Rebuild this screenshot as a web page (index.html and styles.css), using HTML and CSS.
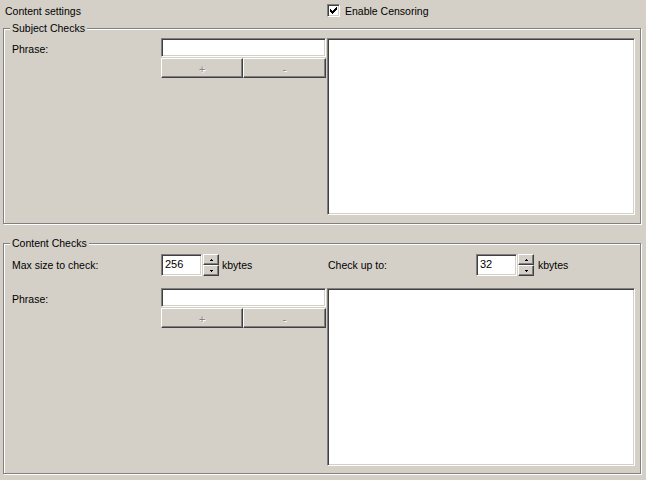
FILE: index.html
```html
<!DOCTYPE html>
<html>
<head>
<meta charset="utf-8">
<link rel="stylesheet" href="styles.css">
</head>
<body>
<div class="page">
  <div class="header">
    <span class="title">Content settings</span>
    <label class="check">
      <span class="checkbox"><svg width="7" height="7" viewBox="0 0 7 7" shape-rendering="crispEdges"><path d="M0 2h1v3h-1z M1 3h1v3h-1z M2 4h1v3h-1z M3 3h1v3h-1z M4 2h1v3h-1z M5 1h1v3h-1z M6 0h1v3h-1z" fill="#000"/></svg></span>
      <span>Enable Censoring</span>
    </label>
  </div>

  <div class="group group-subject">
    <span class="legend">Subject Checks</span>
    <div class="grid">
      <div class="label">Phrase:</div>
      <div class="editcol">
        <div class="edit"></div>
        <div class="btnrow">
          <div class="btn btn-plus">+</div>
          <div class="btn btn-minus">-</div>
        </div>
      </div>
      <div class="list list-subject"></div>
    </div>
  </div>

  <div class="group group-content">
    <span class="legend">Content Checks</span>
    <div class="grid grid-content">
      <div class="label">Max size to check:</div>
      <div class="spinrow">
        <div class="spinedit">256</div>
        <div class="spinner">
          <div class="spinbtn"><svg width="3" height="2" viewBox="0 0 3 2" shape-rendering="crispEdges"><path d="M1 0h1v1h1v1h-3v-1h1z" fill="#000"/></svg></div>
          <div class="spinbtn"><svg width="3" height="2" viewBox="0 0 3 2" shape-rendering="crispEdges"><path d="M0 0h3v1h-1v1h-1v-1h-1z" fill="#000"/></svg></div>
        </div>
        <span class="unit">kbytes</span>
      </div>
      <div class="spinrow spinrow-right">
        <div class="label label-right">Check up to:</div>
        <div class="spinedit">32</div>
        <div class="spinner">
          <div class="spinbtn"><svg width="3" height="2" viewBox="0 0 3 2" shape-rendering="crispEdges"><path d="M1 0h1v1h1v1h-3v-1h1z" fill="#000"/></svg></div>
          <div class="spinbtn"><svg width="3" height="2" viewBox="0 0 3 2" shape-rendering="crispEdges"><path d="M0 0h3v1h-1v1h-1v-1h-1z" fill="#000"/></svg></div>
        </div>
        <span class="unit unit-right">kbytes</span>
      </div>

      <div class="label">Phrase:</div>
      <div class="editcol">
        <div class="edit"></div>
        <div class="btnrow">
          <div class="btn btn-plus">+</div>
          <div class="btn btn-minus">-</div>
        </div>
      </div>
      <div class="list list-content"></div>
    </div>
  </div>
</div>
</body>
</html>
```

FILE: styles.css
```css
* { box-sizing: border-box; }

html, body {
  margin: 0;
  padding: 0;
  background: #d4d0c8;
}

body {
  font-family: "Liberation Sans", Arial, sans-serif;
  font-size: 10.5px;
  line-height: 13px;
  color: #000;
  width: 646px;
  height: 480px;
  overflow: hidden;
}

.page {
  padding: 0;
}

.header {
  height: 28px;
  display: grid;
  grid-template-columns: 322px auto;
  padding: 5px 0 0 5px;
}

.check {
  display: flex;
  align-items: flex-start;
  gap: 5px;
}

.checkbox {
  width: 13px;
  height: 13px;
  margin-top: -1px;
  background: #fff;
  border-top: 1px solid #808080;
  border-left: 1px solid #808080;
  border-bottom: 1px solid #fff;
  border-right: 1px solid #fff;
  box-shadow: inset 1px 1px #404040, inset -1px -1px #d4d0c8;
  display: flex;
  align-items: center;
  justify-content: center;
}

.checkbox svg { display: block; }

.group {
  position: relative;
  margin-left: 3px;
  width: 638px;
  border: 1px solid #808080;
  box-shadow: inset 1px 1px #fff, 1px 1px #fff;
  padding: 9px 6px 8px 8px;
}

.group-content {
  margin-top: 19px;
  padding: 10px 6px 7px 8px;
}

.legend {
  position: absolute;
  top: -7px;
  left: 6px;
  padding: 0 2px;
  background: #d4d0c8;
  white-space: nowrap;
}

.grid {
  display: grid;
  grid-template-columns: 148px 165px 308px;
  column-gap: 1px;
}

.grid-content {
  grid-template-rows: 22px 178px;
  row-gap: 12px;
}

.label {
  margin-top: 5px;
  white-space: nowrap;
}

.editcol {
  display: flex;
  flex-direction: column;
  gap: 1px;
}

.edit {
  height: 19px;
  background: #fff;
  border-top: 1px solid #808080;
  border-left: 1px solid #808080;
  border-bottom: 1px solid #fff;
  border-right: 1px solid #fff;
  box-shadow: inset 1px 1px #404040, inset -1px -1px #d4d0c8;
}

.btnrow {
  display: flex;
  height: 20px;
}

.btn {
  height: 20px;
  border-top: 1px solid #fff;
  border-left: 1px solid #fff;
  border-bottom: 1px solid #404040;
  border-right: 1px solid #404040;
  box-shadow: inset -1px -1px #808080;
  display: flex;
  align-items: center;
  justify-content: center;
  padding-top: 2px;
  color: #808080;
  text-shadow: 1px 1px #fff;
}

.btn-plus { width: 82px; }
.btn-minus { width: 83px; }

.list {
  background: #fff;
  border-top: 1px solid #808080;
  border-left: 1px solid #808080;
  border-bottom: 1px solid #fff;
  border-right: 1px solid #fff;
  box-shadow: inset 1px 1px #404040, inset -1px -1px #d4d0c8;
}

.list-subject { height: 177px; }
.list-content { height: 178px; }

.spinrow {
  display: flex;
  align-items: flex-start;
}

.label-right {
  width: 149px;
  padding-left: 1px;
}

.spinedit {
  width: 41px;
  height: 22px;
  background: #fff;
  border-top: 1px solid #808080;
  border-left: 1px solid #808080;
  border-bottom: 1px solid #fff;
  border-right: 1px solid #fff;
  box-shadow: inset 1px 1px #404040, inset -1px -1px #d4d0c8;
  padding: 3px 0 0 3px;
  font-size: 11px;
}

.spinner {
  width: 16px;
  height: 22px;
  margin-left: 1px;
  display: flex;
  flex-direction: column;
}

.spinbtn {
  height: 11px;
  border-top: 1px solid #fff;
  border-left: 1px solid #fff;
  border-bottom: 1px solid #404040;
  border-right: 1px solid #404040;
  box-shadow: inset -1px -1px #808080;
  display: flex;
  align-items: center;
  justify-content: center;
}

.spinbtn svg { display: block; }

.unit {
  margin: 5px 0 0 3px;
}

.unit-right {
  margin-left: 4px;
}
```
